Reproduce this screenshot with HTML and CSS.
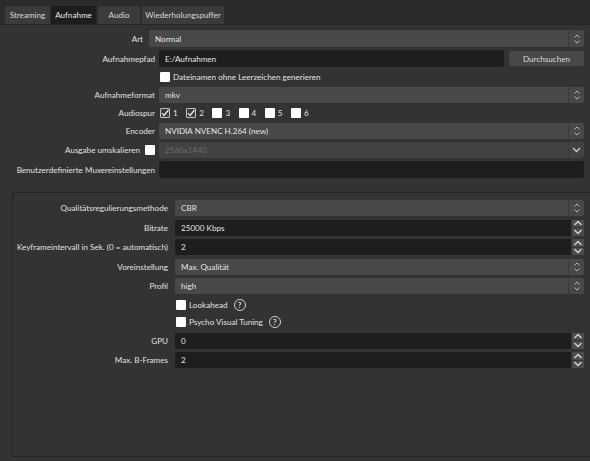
FILE: index.html
```html
<!DOCTYPE html>
<html lang="de">
<head>
    <meta charset="UTF-8">
    <title>Einstellungen - Ausgabe</title>
    <link rel="stylesheet" href="styles.css">
</head>
<body>
    <div class="tabs">
        <div class="tab tab-streaming">Streaming</div>
        <div class="tab tab-aufnahme active">Aufnahme</div>
        <div class="tab tab-audio">Audio</div>
        <div class="tab tab-replay">Wiederholungspuffer</div>
    </div>
    <div class="pane">
        <div class="form">
            <div class="row row-art">
                <div class="lbl">Art</div>
                <div class="combo"><span class="val">Normal</span><span class="arrows"><svg width="8" height="12" viewBox="0 0 8 12"><polyline points="1.5,4.5 4,2 6.5,4.5"/><polyline points="1.5,7.5 4,10 6.5,7.5"/></svg></span></div>
            </div>
            <div class="row row-tall">
                <div class="lbl">Aufnahmepfad</div>
                <div class="input">E:/Aufnahmen</div>
                <div class="button">Durchsuchen</div>
            </div>
            <div class="row row-check">
                <div class="lbl"></div>
                <label class="check"><span class="cb"></span>Dateinamen ohne Leerzeichen generieren</label>
            </div>
            <div class="row">
                <div class="lbl">Aufnahmeformat</div>
                <div class="combo"><span class="val">mkv</span><span class="arrows"><svg width="8" height="12" viewBox="0 0 8 12"><polyline points="1.5,4.5 4,2 6.5,4.5"/><polyline points="1.5,7.5 4,10 6.5,7.5"/></svg></span></div>
            </div>
            <div class="row row-check">
                <div class="lbl">Audiospur</div>
                <div class="tracks">
                    <label class="check"><span class="cb on"><svg width="10" height="10" viewBox="0 0 10 10"><polyline points="2,5 4,7.5 8.5,2"/></svg></span>1</label>
                    <label class="check"><span class="cb on"><svg width="10" height="10" viewBox="0 0 10 10"><polyline points="2,5 4,7.5 8.5,2"/></svg></span>2</label>
                    <label class="check"><span class="cb"></span>3</label>
                    <label class="check"><span class="cb"></span>4</label>
                    <label class="check"><span class="cb"></span>5</label>
                    <label class="check"><span class="cb"></span>6</label>
                </div>
            </div>
            <div class="row">
                <div class="lbl">Encoder</div>
                <div class="combo"><span class="val">NVIDIA NVENC H.264 (new)</span><span class="arrows"><svg width="8" height="12" viewBox="0 0 8 12"><polyline points="1.5,4.5 4,2 6.5,4.5"/><polyline points="1.5,7.5 4,10 6.5,7.5"/></svg></span></div>
            </div>
            <div class="row">
                <div class="lbl lbl-cb">Ausgabe umskalieren <span class="cb"></span></div>
                <div class="combo disabled"><span class="val">2560x1440</span><span class="arrows"><svg width="9" height="6" viewBox="0 0 9 6"><polyline points="1,1 4.5,4.5 8,1"/></svg></span></div>
            </div>
            <div class="row row-tall">
                <div class="lbl">Benutzerdefinierte Muxereinstellungen</div>
                <div class="input"></div>
            </div>
        </div>

        <div class="group">
            <div class="row">
                <div class="lbl">Qualitätsregulierungsmethode</div>
                <div class="combo"><span class="val">CBR</span><span class="arrows"><svg width="8" height="12" viewBox="0 0 8 12"><polyline points="1.5,4.5 4,2 6.5,4.5"/><polyline points="1.5,7.5 4,10 6.5,7.5"/></svg></span></div>
            </div>
            <div class="row">
                <div class="lbl">Bitrate</div>
                <div class="spin"><span class="input">25000 Kbps</span><span class="steps"><span class="step"><svg width="10" height="6" viewBox="0 0 10 6"><polyline points="1.5,5 5,1.5 8.5,5"/></svg></span><span class="step"><svg width="10" height="6" viewBox="0 0 10 6"><polyline points="1.5,1 5,4.5 8.5,1"/></svg></span></span></div>
            </div>
            <div class="row">
                <div class="lbl">Keyframeintervall in Sek. (0 = automatisch)</div>
                <div class="spin"><span class="input">2</span><span class="steps"><span class="step"><svg width="10" height="6" viewBox="0 0 10 6"><polyline points="1.5,5 5,1.5 8.5,5"/></svg></span><span class="step"><svg width="10" height="6" viewBox="0 0 10 6"><polyline points="1.5,1 5,4.5 8.5,1"/></svg></span></span></div>
            </div>
            <div class="row">
                <div class="lbl">Voreinstellung</div>
                <div class="combo"><span class="val">Max. Qualität</span><span class="arrows"><svg width="8" height="12" viewBox="0 0 8 12"><polyline points="1.5,4.5 4,2 6.5,4.5"/><polyline points="1.5,7.5 4,10 6.5,7.5"/></svg></span></div>
            </div>
            <div class="row">
                <div class="lbl">Profil</div>
                <div class="combo"><span class="val">high</span><span class="arrows"><svg width="8" height="12" viewBox="0 0 8 12"><polyline points="1.5,4.5 4,2 6.5,4.5"/><polyline points="1.5,7.5 4,10 6.5,7.5"/></svg></span></div>
            </div>
            <div class="row row-check">
                <div class="lbl"></div>
                <label class="check"><span class="cb"></span>Lookahead<span class="help">?</span></label>
            </div>
            <div class="row row-check">
                <div class="lbl"></div>
                <label class="check"><span class="cb"></span>Psycho Visual Tuning<span class="help">?</span></label>
            </div>
            <div class="row">
                <div class="lbl">GPU</div>
                <div class="spin"><span class="input">0</span><span class="steps"><span class="step"><svg width="10" height="6" viewBox="0 0 10 6"><polyline points="1.5,5 5,1.5 8.5,5"/></svg></span><span class="step"><svg width="10" height="6" viewBox="0 0 10 6"><polyline points="1.5,1 5,4.5 8.5,1"/></svg></span></span></div>
            </div>
            <div class="row">
                <div class="lbl">Max. B-Frames</div>
                <div class="spin"><span class="input">2</span><span class="steps"><span class="step"><svg width="10" height="6" viewBox="0 0 10 6"><polyline points="1.5,5 5,1.5 8.5,5"/></svg></span><span class="step"><svg width="10" height="6" viewBox="0 0 10 6"><polyline points="1.5,1 5,4.5 8.5,1"/></svg></span></span></div>
            </div>
        </div>
    </div>
</body>
</html>
```

FILE: styles.css
```css
html, body {
    margin: 0;
    padding: 0;
    width: 590px;
    height: 461px;
    overflow: hidden;
}
body {
    font-family: Lato, 'Noto Sans', sans-serif;
    font-size: 8.1px;
    color: #e0e0e0;
    background: #2b2b2b;
}
.tabs {
    display: flex;
    padding: 6px 0 0 5px;
    height: 18px;
}
.tab {
    height: 18px;
    line-height: 18px;
    text-align: center;
    background: #3b3b3b;
    border-radius: 2px 2px 0 0;
    color: #d8d8d8;
}
.tab-streaming { width: 45px; }
.tab-aufnahme { width: 45px; margin-left: 1px; }
.tab-audio { width: 42px; margin-left: 2px; }
.tab-replay { width: 82px; margin-left: 2px; }
.tab.active {
    background: #1d1d1d;
    color: #e8e8e8;
}
.pane {
    background: #333333;
    border-top: 1px solid #262626;
    height: 436px;
    padding-top: 5px;
}
.form {
    display: flex;
    flex-direction: column;
    gap: 3px;
    padding-right: 6px;
}
.row {
    display: flex;
    align-items: center;
    height: 16px;
    gap: 4px;
}
.row-tall {
    height: 17px;
}
.row-check {
    height: 14px;
}
.lbl {
    flex: none;
    width: 155px;
    text-align: right;
    white-space: nowrap;
}
.row-art {
    height: 17px;
    gap: 6px;
}
.row-art .lbl {
    width: 143px;
}
.lbl-cb {
    display: flex;
    justify-content: flex-end;
    align-items: center;
    gap: 5px;
}
.combo {
    flex: 1;
    align-self: stretch;
    display: flex;
    background: #484848;
    border-radius: 2px;
    overflow: hidden;
}
.combo .val {
    flex: 1;
    padding-left: 6px;
    display: flex;
    align-items: center;
    color: #e4e4e4;
}
.combo .arrows {
    width: 15px;
    border-left: 1px solid #3a3a3a;
    display: flex;
    align-items: center;
    justify-content: center;
}
.combo svg polyline {
    fill: none;
    stroke: #b8b8b8;
    stroke-width: 1;
}
.combo.disabled {
    background: #424242;
}
.combo.disabled .val {
    color: #6c6c6c;
}
.combo.disabled .arrows {
    border-left-color: #383838;
}
.combo.disabled svg polyline {
    stroke: #cfcfcf;
    stroke-width: 1.3;
}
.input {
    flex: 1;
    align-self: stretch;
    display: flex;
    align-items: center;
    background: #1e1e1e;
    border-radius: 2px;
    padding-left: 6px;
    color: #e4e4e4;
}
.button {
    flex: none;
    width: 75px;
    height: 15px;
    margin-left: 1px;
    display: flex;
    align-items: center;
    justify-content: center;
    background: #484848;
    border-radius: 2px;
    color: #dcdcdc;
}
.check {
    display: flex;
    align-items: center;
    gap: 3px;
    color: #e0e0e0;
}
.row-check > .check {
    margin-left: 1px;
}
.tracks {
    display: flex;
    gap: 8.5px;
    margin-left: 1px;
}
.cb {
    flex: none;
    width: 10px;
    height: 10px;
    background: #ffffff;
    border-radius: 1px;
    box-sizing: border-box;
    display: inline-flex;
}
.cb.on {
    background: #3c3c3c;
    border: 1px solid #c4c4c4;
}
.cb.on svg {
    margin: -1px;
}
.cb.on polyline {
    fill: none;
    stroke: #f0f0f0;
    stroke-width: 1.2;
}
.help {
    width: 10px;
    height: 10px;
    border: 1px solid #cfcfcf;
    border-radius: 50%;
    font-size: 8px;
    line-height: 10px;
    text-align: center;
    font-weight: bold;
    margin-left: 3px;
    color: #d8d8d8;
}
.group {
    margin: 14px 0 0 12px;
    width: 600px;
    height: 256px;
    border: 1px solid #262626;
    border-right: none;
    padding-top: 7px;
    display: flex;
    flex-direction: column;
    gap: 3.5px;
}
.group .row {
    gap: 7px;
    width: 571px;
}
.group .lbl {
    width: 155px;
}
.spin {
    flex: 1;
    align-self: stretch;
    display: flex;
    gap: 1px;
}
.spin .input {
    border-radius: 2px 0 0 2px;
}
.steps {
    width: 12px;
    display: flex;
    flex-direction: column;
    gap: 1px;
}
.step {
    flex: 1;
    background: #4c4c4c;
    display: flex;
    align-items: center;
    justify-content: center;
}
.step polyline {
    fill: none;
    stroke: #d6d6d6;
    stroke-width: 1.4;
}
```
